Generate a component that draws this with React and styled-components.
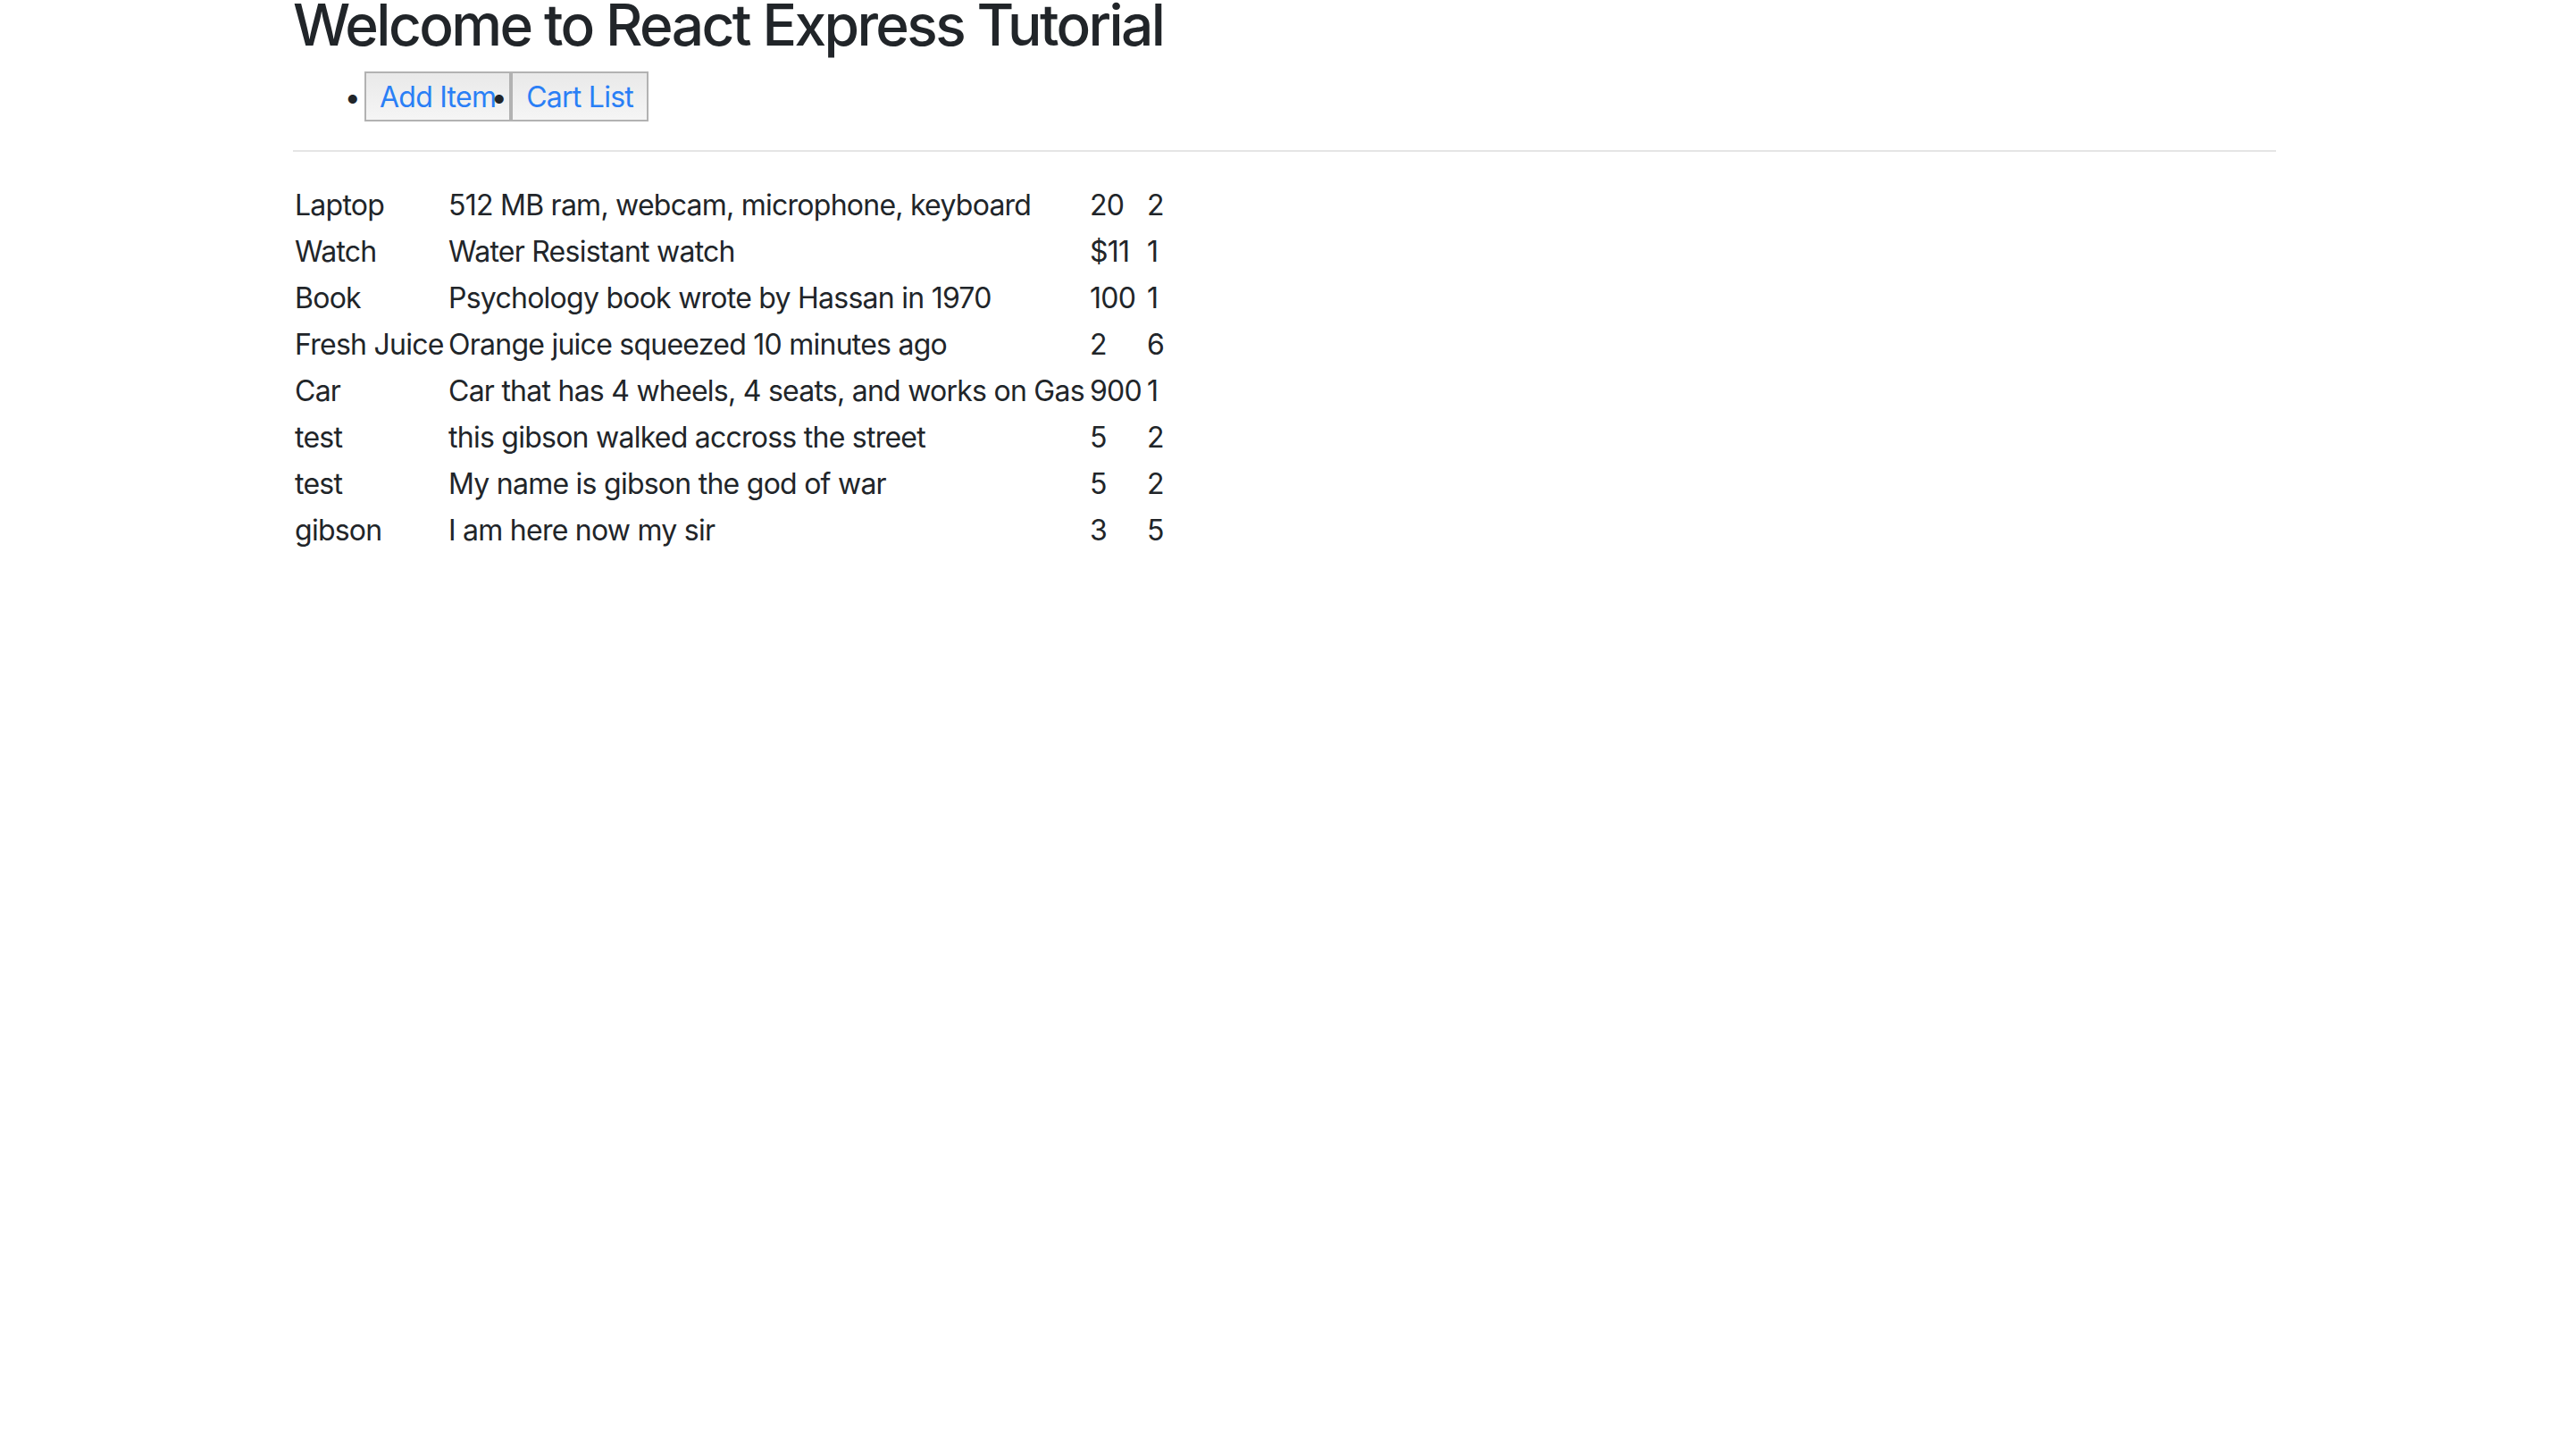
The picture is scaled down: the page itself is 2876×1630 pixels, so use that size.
import React from "react";
import styled, { createGlobalStyle } from "styled-components";

const GlobalStyle = createGlobalStyle`
  html, body {
    margin: 0;
    padding: 0;
    background: #fff;
  }
  body {
    font-family: Inter, "Noto Sans", "Liberation Sans", sans-serif;
    font-size: 32px;
    line-height: 1.5;
    letter-spacing: -0.75px;
    color: #212529;
  }
`;

const items = [
  { name: "Laptop", desc: "512 MB ram, webcam, microphone, keyboard", price: "20", qty: 2 },
  { name: "Watch", desc: "Water Resistant watch", price: "$11", qty: 1 },
  { name: "Book", desc: "Psychology book wrote by Hassan in 1970", price: "100", qty: 1 },
  { name: "Fresh Juice", desc: "Orange juice squeezed 10 minutes ago", price: "2", qty: 6 },
  { name: "Car", desc: "Car that has 4 wheels, 4 seats, and works on Gas", price: "900", qty: 1 },
  { name: "test", desc: "this gibson walked accross the street", price: "5", qty: 2 },
  { name: "test", desc: "My name is gibson the god of war", price: "5", qty: 2 },
  { name: "gibson", desc: "I am here now my sir", price: "3", qty: 5 }
];

const Container = styled.div`
  width: 2220px;
  margin: 0 auto;
  padding: 0 30px;
`;

const Title = styled.h2`
  margin: 0 0 24px;
  font-size: 64px;
  font-weight: 500;
  line-height: 56px;
  letter-spacing: -2.6px;
`;

const Nav = styled.ul`
  display: flex;
  margin: 0 0 32px;
  padding-left: 80px;
`;

const NavItem = styled.li`
  font-size: 32px;

  &::marker {
    content: "•\\2009";
  }
`;

const NavButton = styled.button`
  margin: 0;
  padding: 3px 15px 1px;
  font: inherit;
  letter-spacing: inherit;
  line-height: 48px;
  border: 2px solid #b2b2b2;
  background: linear-gradient(#e9e9e9, #f5f5f5);
  cursor: pointer;
`;

const NavLink = styled.a`
  color: #2a7ff6;
  text-decoration: none;
`;

const Rule = styled.hr`
  margin: 32px 0;
  border: 0;
  border-top: 2px solid rgba(0, 0, 0, 0.1);
`;

const Table = styled.table`
  width: ${(p) => p.$w}px;
  border-collapse: collapse;
  table-layout: fixed;
`;

const Col = styled.col`
  width: ${(p) => p.$w}px;
`;

const Cell = styled.td`
  padding: 4px 2px 0;
  white-space: nowrap;
  line-height: 48px;
`;

const columns = [172, 718, 64, 50];

export default function App() {
  return (
    <>
      <GlobalStyle />
      <Container>
        <Title>Welcome to React Express Tutorial</Title>
        <Nav>
          <NavItem>
            <NavButton>
              <NavLink href="#add">Add Item</NavLink>
            </NavButton>
          </NavItem>
          <NavItem>
            <NavButton>
              <NavLink href="#cart">Cart List</NavLink>
            </NavButton>
          </NavItem>
        </Nav>
        <Rule />
        <Table $w={columns.reduce((a, b) => a + b, 0)}>
          <colgroup>
            {columns.map((w, i) => (
              <Col key={i} $w={w} />
            ))}
          </colgroup>
          <tbody>
            {items.map((it, i) => (
              <tr key={i}>
                <Cell>{it.name}</Cell>
                <Cell>{it.desc}</Cell>
                <Cell>{it.price}</Cell>
                <Cell>{it.qty}</Cell>
              </tr>
            ))}
          </tbody>
        </Table>
      </Container>
    </>
  );
}
